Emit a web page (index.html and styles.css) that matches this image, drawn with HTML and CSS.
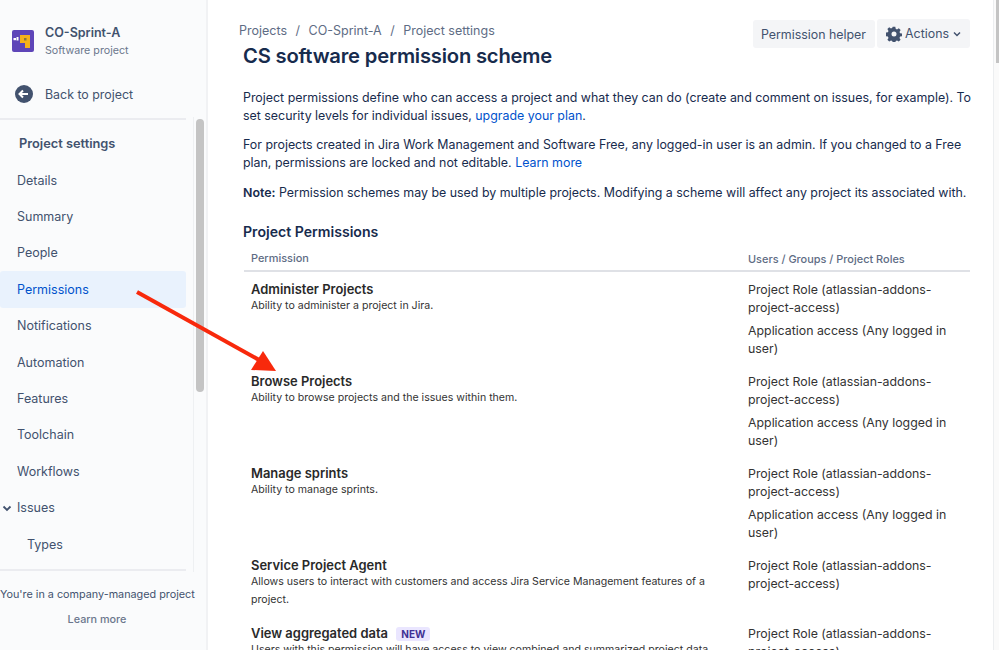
FILE: index.html
```html
<!DOCTYPE html>
<html lang="en">
<head>
<meta charset="utf-8">
<title>CS software permission scheme</title>
<link rel="stylesheet" href="styles.css">
</head>
<body>
<div class="app">
  <aside class="sidebar">
    <div class="project">
      <svg class="project-icon" width="22" height="22" viewBox="0 0 22 22"><rect width="22" height="22" rx="2" fill="#5e45b8"/><rect x="1.500" y="8" width="2.500" height="2.200" fill="#fff"/><rect x="4.500" y="7" width="2" height="3.500" fill="#fff"/><path d="M8 5h10v13h-5v-5H8z" fill="#f5b21b"/><rect x="12" y="8" width="2.500" height="2.500" fill="#8a7a3a"/></svg>
      <div class="project-text">
        <div class="project-name">CO-Sprint-A</div>
        <div class="project-type">Software project</div>
      </div>
    </div>
    <div class="back">
      <svg width="18" height="18" viewBox="0 0 18 18"><circle cx="9" cy="9" r="9" fill="#42526e"/><path d="M4.500 9H13M8 5.500 4.500 9 8 12.500" stroke="#fff" stroke-width="2" fill="none"/></svg>
      <span>Back to project</span>
    </div>
    <div class="nav-wrap">
      <nav class="nav">
        <div class="nav-title">Project settings</div>
        <div class="nav-item">Details</div>
        <div class="nav-item">Summary</div>
        <div class="nav-item">People</div>
        <div class="nav-item active">Permissions</div>
        <div class="nav-item">Notifications</div>
        <div class="nav-item">Automation</div>
        <div class="nav-item">Features</div>
        <div class="nav-item">Toolchain</div>
        <div class="nav-item">Workflows</div>
        <div class="nav-item issues"><svg width="10" height="10" viewBox="0 0 10 10"><path d="M1.500 3.500 5 7l3.500-3.500" stroke="#42526e" stroke-width="1.800" fill="none"/></svg>Issues</div>
        <div class="nav-item sub">Types</div>
      </nav>
      <div class="scroll-track"><div class="scroll-thumb"></div></div>
    </div>
    <div class="side-foot">
      <div class="foot-text">You're in a company-managed project</div>
      <div class="foot-link">Learn more</div>
    </div>
  </aside>
  <main class="main">
    <div class="top">
      <div class="crumbs"><span>Projects</span><span class="sep">/</span><span>CO-Sprint-A</span><span class="sep">/</span><span>Project settings</span></div>
      <div class="actions">
        <div class="btn btn-helper">Permission helper</div>
        <div class="btn btn-actions">
          <svg width="16" height="16" viewBox="0 0 16 16"><path fill-rule="evenodd" fill="#42526e" d="M6.700.8h2.600l.4 2 1.300.6 1.800-1.100 1.800 1.800-1.100 1.800.6 1.300 2 .4v2.600l-2 .4-.6 1.300 1.100 1.800-1.800 1.800-1.800-1.100-1.300.6-.4 2H6.700l-.4-2-1.300-.6-1.800 1.100-1.800-1.800 1.100-1.800-.6-1.300-2-.4V6.600l2-.4.6-1.300-1.100-1.800 1.800-1.800 1.800 1.100 1.300-.6zM8 5.500a2.500 2.500 0 1 0 0 5 2.500 2.500 0 0 0 0-5z"/></svg>
          <span>Actions</span>
          <svg width="10" height="10" viewBox="0 0 10 10"><path d="M2 3.500 5 6.500l3-3" stroke="#42526e" stroke-width="1.500" fill="none"/></svg>
        </div>
      </div>
    </div>
    <h1 class="title">CS software permission scheme</h1>
    <p class="para">Project permissions define who can access a project and what they can do (create and comment on issues, for example). To set security levels for individual issues, <a class="link">upgrade your plan</a>.</p>
    <p class="para">For projects created in Jira Work Management and Software Free, any logged-in user is an admin. If you changed to a Free plan, permissions are locked and not editable. <a class="link">Learn more</a></p>
    <p class="para"><b class="note">Note:</b> Permission schemes may be used by multiple projects. Modifying a scheme will affect any project its associated with.</p>
    <h2 class="section">Project Permissions</h2>
    <div class="table">
      <div class="thead"><div class="col-a">Permission</div><div class="col-b">Users / Groups / Project Roles</div></div>
      <div class="row">
        <div class="col-a"><div class="perm">Administer Projects</div><div class="desc">Ability to administer a project in Jira.</div></div>
        <div class="col-b"><p class="role">Project Role (atlassian-addons-project-access)</p><p class="role">Application access (Any logged in user)</p></div>
      </div>
      <div class="row">
        <div class="col-a"><div class="perm">Browse Projects</div><div class="desc">Ability to browse projects and the issues within them.</div></div>
        <div class="col-b"><p class="role">Project Role (atlassian-addons-project-access)</p><p class="role">Application access (Any logged in user)</p></div>
      </div>
      <div class="row">
        <div class="col-a"><div class="perm">Manage sprints</div><div class="desc">Ability to manage sprints.</div></div>
        <div class="col-b"><p class="role">Project Role (atlassian-addons-project-access)</p><p class="role">Application access (Any logged in user)</p></div>
      </div>
      <div class="row row-short">
        <div class="col-a"><div class="perm">Service Project Agent</div><div class="desc">Allows users to interact with customers and access Jira Service Management features of a project.</div></div>
        <div class="col-b"><p class="role">Project Role (atlassian-addons-project-access)</p></div>
      </div>
      <div class="row">
        <div class="col-a"><div class="perm">View aggregated data <span class="lozenge">NEW</span></div><div class="desc">Users with this permission will have access to view combined and summarized project data.</div></div>
        <div class="col-b"><p class="role">Project Role (atlassian-addons-project-access)</p></div>
      </div>
    </div>
  </main>
  <div class="page-scroll"><div class="page-thumb"></div></div>
</div>
<svg class="arrow" width="300" height="100" viewBox="0 0 300 100"><path d="M2 3 126 72" stroke="#f8290c" stroke-width="4" fill="none"/><path d="M128 62 141 82 116 81z" fill="#f8290c"/></svg>
</body>
</html>
```

FILE: styles.css
```css
* { box-sizing: border-box; }
html, body { margin: 0; height: 100%; overflow: hidden; }
body { font-family: Inter, "Liberation Sans", sans-serif; font-size: 12.400px; color: #172b4d; background: #fff; position: relative; }
.app { display: flex; height: 650px; }
.sidebar { width: 208px; flex: none; background: #fafbfc; border-right: 2px solid #f1f2f4; display: flex; flex-direction: column; height: 650px; }
.project { display: flex; align-items: center; gap: 11px; padding: 22px 0 0 12px; height: 60px; }
.project-name { font-size: 12.500px; font-weight: 600; color: #42526e; line-height: 18px; padding-top: 1px; }
.project-type { font-size: 10.700px; color: #6b778c; line-height: 18px; }
.back { display: flex; align-items: center; gap: 12px; padding-left: 15px; height: 40px; margin-top: 14px; color: #42526e; }
.back svg { flex: none; }
.nav-wrap { display: flex; flex: 1; min-height: 0; position: relative; overflow: hidden; padding-top: 1px; }
.nav { width: 186px; flex: none; border-top: 2px solid #ebecf0; border-bottom: 2px solid #ebecf0; margin-top: 3px; color: #42526e; height: 453px; font-size: 12.500px; }
.nav-title { font-weight: 600; font-size: 12.800px; padding: 16px 0 0 19px; height: 42px; color: #42526e; }
.nav-item { height: 36.400px; display: flex; align-items: center; padding-left: 17px; border-radius: 3px; }
.nav-item.active { background: #e9f2fd; color: #0052cc; }
.nav-item.issues { padding-left: 2px; gap: 5px; }
.nav-item.sub { padding-left: 27px; }
.scroll-track { flex: none; width: 15px; margin: 2px 0 0 7px; border-left: 1px solid #eef0f2; border-right: 1px solid #f1f2f4; position: relative; }
.scroll-thumb { position: absolute; left: 2px; top: 2px; width: 8px; height: 273px; border-radius: 4px; background: #c4c4c4; }
.side-foot { height: 78px; flex: none; text-align: center; font-size: 10.800px; color: #42526e; padding-top: 15px; white-space: nowrap; margin-top: -4px; background: #fafbfc; position: relative; }
.foot-text { text-align: left; line-height: 16px; }
.foot-link { color: #6b778c; margin-top: 9px; line-height: 16px; font-weight: 500; margin-right: 12px; }
.main { flex: 1; min-width: 0; padding: 0 23px 0 35px; overflow: hidden; height: 650px; }
.top { display: flex; justify-content: space-between; align-items: flex-start; padding-top: 20px; height: 40px; }
.crumbs { display: flex; gap: 8.500px; color: #5e6c84; margin-left: -4px; padding-top: 3px; line-height: 16px; font-size: 12.500px; }
.actions { display: flex; gap: 2px; }
.btn { background: #f4f5f7; color: #42526e; border-radius: 3px; height: 28px; display: flex; align-items: center; }
.btn-helper { padding: 0 9px 0 8px; }
.btn-actions { padding: 0 8px 0 9px; gap: 3px; height: 29px; margin-top: -1px; }
.title { font-size: 20.200px; font-weight: 600; color: #172b4d; line-height: 28px; margin: 2px 0 0; letter-spacing: -0.2px; }
.para { margin: 0 -3px 0 0; line-height: 18px; color: #172b4d; padding-top: 11px; }
.para:first-of-type { padding-top: 19px; }
.para:last-of-type { padding-top: 12px; }
.note { font-weight: 600; }
.link { color: #0052cc; }
.section { font-size: 14.100px; font-weight: 600; margin: 20px 0 0; line-height: 20px; color: #172b4d; }
.table { margin-top: 9px; margin-left: 1px; }
.thead { display: flex; height: 21px; border-bottom: 2px solid #dfe1e6; font-size: 10.950px; color: #5e6c84; font-weight: 500; line-height: 16px; }
.row { display: flex; min-height: 92px; padding-top: 8px; }
.thead + .row { margin-top: 1px; }
.row-short { min-height: 68px; }
.col-a { width: 504px; flex: none; padding-left: 7px; padding-right: 20px; margin-top: -1px; }
.col-b { flex: 1; min-width: 0; }
.perm { font-weight: 600; color: #292929; line-height: 18px; white-space: nowrap; font-size: 12.950px; }
.desc { font-size: 10.600px; line-height: 18px; color: #333; margin-top: -1px; }
.role { margin: 0 0 5px; line-height: 18px; color: #333; font-size: 12.350px; }
.lozenge { display: inline-block; background: #eae6ff; color: #403294; font-size: 10px; font-weight: 700; border-radius: 3px; padding: 0 5px; line-height: 14px; margin-left: 5px; }
.page-scroll { width: 6px; flex: none; border-left: 1px solid #eceef0; background: #fafafa; position: relative; }
.page-thumb { position: absolute; right: 0; top: 0; width: 3px; height: 63px; background: #c4c4c4; }
.arrow { position: absolute; left: 135px; top: 289px; pointer-events: none; }
```
